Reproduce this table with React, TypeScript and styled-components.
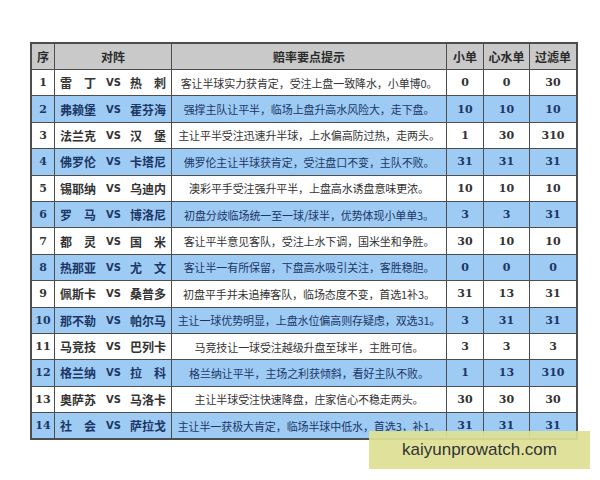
import { createGlobalStyle } from 'styled-components';
import styled from 'styled-components';

const GlobalStyle = createGlobalStyle`
  html, body {
    margin: 0;
    padding: 0;
    background: #ffffff;
  }
  body {
    font-family: "Noto Sans CJK SC", "Noto Sans", sans-serif;
  }
`;

const Page = styled.div`
  position: relative;
  width: 600px;
  height: 480px;
  padding: 42px 0 0 30px;
  box-sizing: border-box;
  overflow: hidden;
`;

const Table = styled.table`
  border-collapse: collapse;
  table-layout: fixed;
  width: 539px;
  border: 2px solid #4d4d4d;
`;

const HeadCell = styled.th<{ $w: number }>`
  width: ${(p) => p.$w}px;
  height: 25px;
  padding: 0;
  background: #c9c9c9;
  border: 1.5px solid #4d4d4d;
  color: #2b2b2b;
  font: bold 12px "Noto Sans CJK SC", sans-serif;
  text-align: center;
`;

const Row = styled.tr<{ $alt: boolean }>`
  height: 26.4px;
  background: ${(p) => (p.$alt ? '#9ecbf4' : '#ffffff')};
  color: ${(p) => (p.$alt ? '#1c3766' : '#333333')};
`;

const Cell = styled.td`
  padding: 0;
  border: 1.5px solid #4d4d4d;
  text-align: center;
  white-space: nowrap;
  overflow: hidden;
`;

const NumCell = styled(Cell)`
  font: bold 11px "DejaVu Serif", "Liberation Serif", serif;
`;

const TipCell = styled(Cell)`
  font: 11px "Noto Sans CJK SC", sans-serif;
  letter-spacing: -0.1px;
`;

const Match = styled.div`
  display: flex;
  align-items: center;
  justify-content: center;
  gap: 10px;
  font: bold 12px "Noto Sans CJK SC", sans-serif;
`;

const Team = styled.span`
  display: inline-block;
  width: 36px;
  text-align: justify;
  text-align-last: justify;
`;

const Vs = styled.span`
  font: bold 10px "DejaVu Sans", sans-serif;
  width: 14px;
`;

const Watermark = styled.div`
  position: absolute;
  left: 369px;
  top: 431px;
  width: 221px;
  height: 38px;
  background: rgba(222, 224, 148, 0.93);
  display: flex;
  align-items: center;
  justify-content: center;
  font: 17px "Liberation Sans", Arial, sans-serif;
  color: #333333;
`;

type Game = {
  home: string;
  away: string;
  tip: string;
  a: string;
  b: string;
  c: string;
};

const games: Game[] = [
  { home: '雷丁', away: '热刺', tip: '客让半球实力获肯定，受注上盘一致降水，小单博0。', a: '0', b: '0', c: '30' },
  { home: '弗赖堡', away: '霍芬海', tip: '强撑主队让平半，临场上盘升高水风险大，走下盘。', a: '10', b: '10', c: '10' },
  { home: '法兰克', away: '汉堡', tip: '主让平半受注迅速升半球，上水偏高防过热，走两头。', a: '1', b: '30', c: '310' },
  { home: '佛罗伦', away: '卡塔尼', tip: '佛罗伦主让半球获肯定，受注盘口不变，主队不败。', a: '31', b: '31', c: '31' },
  { home: '锡耶纳', away: '乌迪内', tip: '澳彩平手受注强升平半，上盘高水诱盘意味更浓。', a: '10', b: '10', c: '10' },
  { home: '罗马', away: '博洛尼', tip: '初盘分歧临场统一至一球/球半，优势体现小单单3。', a: '3', b: '3', c: '31' },
  { home: '都灵', away: '国米', tip: '客让平半意见客队，受注上水下调，国米坐和争胜。', a: '30', b: '10', c: '10' },
  { home: '热那亚', away: '尤文', tip: '客让半一有所保留，下盘高水吸引关注，客胜稳胆。', a: '0', b: '0', c: '0' },
  { home: '佩斯卡', away: '桑普多', tip: '初盘平手并未追捧客队，临场态度不变，首选1补3。', a: '31', b: '13', c: '31' },
  { home: '那不勒', away: '帕尔马', tip: '主让一球优势明显，上盘水位偏高则存疑虑，双选31。', a: '3', b: '31', c: '31' },
  { home: '马竞技', away: '巴列卡', tip: '马竞技让一球受注越级升盘至球半，主胜可信。', a: '3', b: '3', c: '3' },
  { home: '格兰纳', away: '拉科', tip: '格兰纳让平半，主场之利获倾斜，看好主队不败。', a: '1', b: '13', c: '310' },
  { home: '奥萨苏', away: '马洛卡', tip: '主让半球受注快速降盘，庄家信心不稳走两头。', a: '30', b: '30', c: '30' },
  { home: '社会', away: '萨拉戈', tip: '主让半一获极大肯定，临场半球中低水，首选3，补1。', a: '31', b: '31', c: '31' },
];

export default function App() {
  return (
    <Page>
      <GlobalStyle />
      <Table>
        <thead>
          <tr>
            <HeadCell $w={22}>序</HeadCell>
            <HeadCell $w={116}>对阵</HeadCell>
            <HeadCell $w={274}>赔率要点提示</HeadCell>
            <HeadCell $w={36}>小单</HeadCell>
            <HeadCell $w={45}>心水单</HeadCell>
            <HeadCell $w={46}>过滤单</HeadCell>
          </tr>
        </thead>
        <tbody>
          {games.map((g, i) => (
            <Row key={i} $alt={i % 2 === 1}>
              <NumCell>{i + 1}</NumCell>
              <Cell>
                <Match>
                  <Team>{g.home}</Team>
                  <Vs>VS</Vs>
                  <Team>{g.away}</Team>
                </Match>
              </Cell>
              <TipCell>{g.tip}</TipCell>
              <NumCell>{g.a}</NumCell>
              <NumCell>{g.b}</NumCell>
              <NumCell>{g.c}</NumCell>
            </Row>
          ))}
        </tbody>
      </Table>
      <Watermark>kaiyunprowatch.com</Watermark>
    </Page>
  );
}
